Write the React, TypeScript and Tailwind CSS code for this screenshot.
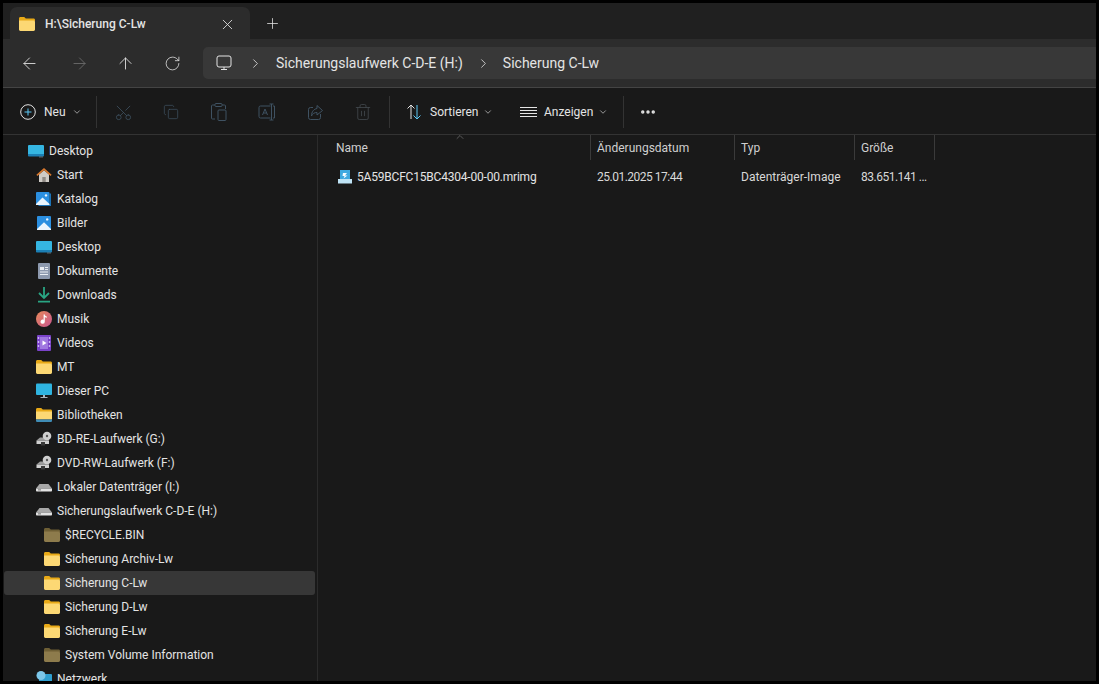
import {
  ArrowLeft,
  ArrowRight,
  ArrowUp,
  ChevronDown,
  ChevronRight,
  ChevronUp,
  Copy,
  MoreHorizontal,
  Plus,
  RotateCw,
  Scissors,
  Trash2,
  X,
} from 'lucide-react';

type IconKind =
  | 'desktop'
  | 'home'
  | 'gallery'
  | 'pictures'
  | 'docs'
  | 'download'
  | 'music'
  | 'video'
  | 'folder'
  | 'dim'
  | 'pc'
  | 'library'
  | 'optical'
  | 'drive'
  | 'network';

const Folder = ({ dim = false }: { dim?: boolean }) => (
  <svg width="16" height="16" viewBox="0 0 16 16">
    <path d="M0 2.500C0 1.700.6 1 1.400 1h3.800l1.600 1.500h7.800c.8 0 1.400.6 1.400 1.400V5H0z" fill={dim ? '#6e5f35' : '#e8a917'} />
    <path d="M0 4.500h14.600c.8 0 1.400.6 1.400 1.400v7.700c0 .8-.6 1.400-1.400 1.400H1.400C.6 15 0 14.400 0 13.600z" fill={dim ? '#8d7b4c' : '#fcd874'} />
  </svg>
);

const NavIcon = ({ kind }: { kind: IconKind }) => {
  if (kind === 'folder') return <Folder />;
  if (kind === 'dim') return <Folder dim />;
  if (kind === 'desktop')
    return (
      <svg width="16" height="16" viewBox="0 0 16 16">
        <path d="M1 2h14a1 1 0 0 1 1 1v9.500H0V3a1 1 0 0 1 1-1z" fill="#35b6e2" />
        <path d="M0 11h16v1.600a.9.9 0 0 1-.9.9H.9a.9.9 0 0 1-.9-.9z" fill="#1b7fb5" />
        <path d="M11.500 13.500h1v1h-1zM13.500 13.500h1v1h-1z" fill="#9fb4c0" />
      </svg>
    );
  if (kind === 'home')
    return (
      <svg width="16" height="16" viewBox="0 0 16 16">
        <path d="M3 7.500 8 3.200l5 4.300V15H3z" fill="#cfcbc6" />
        <path d="M6.300 10h3.400v5H6.300z" fill="#8f8a85" />
        <path d="M8 1 .4 7.800l1 1.100L8 3.200l6.600 5.700 1-1.100z" fill="#d9782d" />
      </svg>
    );
  if (kind === 'gallery' || kind === 'pictures')
    return (
      <svg width="16" height="16" viewBox="0 0 16 16">
        {kind === 'gallery' && <path d="M13.500 2.500H15v12.600H2.500v-1.300h11z" fill="#1c74b8" />}
        <rect x={kind === 'gallery' ? 0 : 1} y="1" width={kind === 'gallery' ? 13.5 : 14} height={kind === 'gallery' ? 13 : 14} rx="1" fill="#2b8fe0" />
        <path d={kind === 'gallery' ? 'M0 13 6.500 6.500 13.500 13v1H0z' : 'M1 14 8 7.200 15 14v1H1z'} fill="#eaf5fd" />
        <circle cx={kind === 'gallery' ? 10 : 11.2} cy="4.400" r="1.200" fill="#eaf5fd" />
      </svg>
    );
  if (kind === 'docs')
    return (
      <svg width="16" height="16" viewBox="0 0 16 16">
        <rect x="2" y="0" width="12" height="16" rx="1" fill="#8d99ae" />
        <path d="M4 4h4v3H4zM9 4h3v1H9zM9 6h3v1H9zM4 8.500h8v1H4zM4 11h8v1H4z" fill="#e9edf3" />
      </svg>
    );
  if (kind === 'download')
    return (
      <svg width="16" height="16" viewBox="0 0 16 16" fill="none" stroke="#29a583" strokeWidth="1.8">
        <path d="M8 0v10.500M3 6 8 11l5-5M2 14.700h12" />
      </svg>
    );
  if (kind === 'music')
    return (
      <svg width="16" height="16" viewBox="0 0 16 16">
        <defs>
          <linearGradient id="mus" x1="0" y1="0" x2="1" y2="1">
            <stop offset="0" stopColor="#e88a5a" />
            <stop offset="1" stopColor="#c9568f" />
          </linearGradient>
        </defs>
        <circle cx="8" cy="8" r="8" fill="url(#mus)" />
        <path d="M7.600 3.500h1.200c.2 1.300 1 1.800 2 2v1.300c-.8 0-1.500-.3-2-.7v4.600a2.100 2.100 0 1 1-1.200-1.900z" fill="#fff" />
      </svg>
    );
  if (kind === 'video')
    return (
      <svg width="16" height="16" viewBox="0 0 16 16">
        <rect x="1" y="0" width="14" height="16" rx="1" fill="#7a43c9" />
        <rect x="4" y="2" width="8" height="12" fill="#a078e0" />
        <path d="M1.800 2h1.400v2H1.800zM1.800 6h1.400v2H1.800zM1.800 10h1.400v2H1.800zM12.800 2h1.400v2h-1.400zM12.800 6h1.400v2h-1.400zM12.800 10h1.400v2h-1.400z" fill="#cbb4f0" />
        <path d="M6.500 5.500 10.500 8l-4 2.500z" fill="#fff" />
      </svg>
    );
  if (kind === 'pc')
    return (
      <svg width="16" height="16" viewBox="0 0 16 16">
        <rect x="0" y="0.500" width="16" height="11.500" rx="1" fill="#2fb4e0" />
        <path d="M7 12h2v2H7zM4.500 14h7v1h-7z" fill="#a9b4bd" />
      </svg>
    );
  if (kind === 'library')
    return (
      <svg width="16" height="16" viewBox="0 0 16 16">
        <path d="M0 2.500C0 1.700.6 1 1.400 1h3.800l1.600 1.500h7.800c.8 0 1.400.6 1.400 1.400V5H0z" fill="#e8a917" />
        <path d="M0 4.500h16v8H0z" fill="#fcd874" />
        <path d="M0 12.500h16v1.200c0 .7-.6 1.300-1.400 1.300H1.400C.6 15 0 14.400 0 13.700z" fill="#3f8cb5" />
      </svg>
    );
  if (kind === 'optical')
    return (
      <svg width="16" height="16" viewBox="0 0 16 16">
        <path d="M.5 9.500 4 6.500h7l2 3z" fill="#9c9c9c" />
        <path d="M.5 9.500H13v3.500H.5z" fill="#d0d0d0" />
        <path d="M5 11h4v3.500H5z" fill="#3a3a3a" />
        <circle cx="11" cy="5" r="4.300" fill="#cfcfcf" />
        <circle cx="11" cy="5" r="1.200" fill="#555" />
      </svg>
    );
  if (kind === 'drive')
    return (
      <svg width="16" height="16" viewBox="0 0 16 16">
        <path d="M3.500 5h9L16 9.500H0z" fill="#a8a8a8" />
        <path d="M0 9.500h16v2.200c0 .4-.3.800-.8.800H.8c-.5 0-.8-.4-.8-.8z" fill="#e2e2e2" />
        <path d="M2 10.500h3v.8H2z" fill="#555" />
      </svg>
    );
  return (
    <svg width="16" height="16" viewBox="0 0 16 16">
      <rect x="3" y="3" width="13" height="11" rx="1" fill="#2f9fd0" />
      <circle cx="5" cy="4.500" r="4.500" fill="#7cc7ea" />
    </svg>
  );
};

const navItems: { label: string; icon: IconKind; level: number; selected?: boolean }[] = [
  { label: 'Desktop', icon: 'desktop', level: 0 },
  { label: 'Start', icon: 'home', level: 1 },
  { label: 'Katalog', icon: 'gallery', level: 1 },
  { label: 'Bilder', icon: 'pictures', level: 1 },
  { label: 'Desktop', icon: 'desktop', level: 1 },
  { label: 'Dokumente', icon: 'docs', level: 1 },
  { label: 'Downloads', icon: 'download', level: 1 },
  { label: 'Musik', icon: 'music', level: 1 },
  { label: 'Videos', icon: 'video', level: 1 },
  { label: 'MT', icon: 'folder', level: 1 },
  { label: 'Dieser PC', icon: 'pc', level: 1 },
  { label: 'Bibliotheken', icon: 'library', level: 1 },
  { label: 'BD-RE-Laufwerk (G:)', icon: 'optical', level: 1 },
  { label: 'DVD-RW-Laufwerk (F:)', icon: 'optical', level: 1 },
  { label: 'Lokaler Datenträger (I:)', icon: 'drive', level: 1 },
  { label: 'Sicherungslaufwerk C-D-E (H:)', icon: 'drive', level: 1 },
  { label: '$RECYCLE.BIN', icon: 'dim', level: 2 },
  { label: 'Sicherung Archiv-Lw', icon: 'folder', level: 2 },
  { label: 'Sicherung C-Lw', icon: 'folder', level: 2, selected: true },
  { label: 'Sicherung D-Lw', icon: 'folder', level: 2 },
  { label: 'Sicherung E-Lw', icon: 'folder', level: 2 },
  { label: 'System Volume Information', icon: 'dim', level: 2 },
  { label: 'Netzwerk', icon: 'network', level: 1 },
];

const rowPadding = ['pl-[24px]', 'pl-[32px]', 'pl-[40px]'];

const NavRow = ({ item }: { item: (typeof navItems)[number] }) => (
  <div
    className={`flex h-[24px] shrink-0 items-center gap-[5px] rounded-[3px] ${rowPadding[item.level]} ${item.selected ? 'bg-[#373737]' : ''}`}
  >
    <NavIcon kind={item.icon} />
    <span className="whitespace-nowrap">{item.label}</span>
  </div>
);

const DisabledIcon = ({ children }: { children: React.ReactNode }) => (
  <div className="flex w-[48px] justify-center text-[#3f5262]">{children}</div>
);

const Separator = () => <div className="h-[32px] w-px bg-[#333333]" />;

const FileIcon = () => (
  <svg width="14" height="14" viewBox="0 0 14 14">
    <path d="M2 0h10v9H2z" fill="#3fa9e0" />
    <path d="M0 9h14v4.500H0z" fill="#bfe3f5" />
    <path d="M5 3h4L7 5.500h2.500L5.500 8.500 6.500 6H4.500z" fill="#f5fbff" />
  </svg>
);

export default function App() {
  return (
    <div className="h-[684px] w-[1099px] overflow-hidden bg-black p-[3px] font-['Roboto',sans-serif] text-[12px] text-[#e4e4e4]">
      <div className="flex h-full flex-col overflow-hidden bg-[#191919]">
        {/* tabs */}
        <div className="flex h-[36px] shrink-0 items-end bg-[#202020] pl-[7px]">
          <div className="flex h-[32px] w-[240px] items-center rounded-t-[7px] bg-[#2c2c2c] pl-[9px] pr-[14px] pt-[2px]">
            <Folder />
            <span className="ml-[10px] font-medium">H:\Sicherung C-Lw</span>
            <X className="ml-auto" size={17} strokeWidth={1.2} />
          </div>
          <div className="flex h-[32px] w-[45px] items-center justify-center">
            <Plus size={17} strokeWidth={1.1} />
          </div>
        </div>

        {/* address row */}
        <div className="flex h-[49px] shrink-0 items-center border-b border-[#444444] bg-[#2c2c2c] text-[14px]">
          <div className="flex w-[200px] shrink-0 items-center">
            <div className="flex w-[52px] justify-center">
              <ArrowLeft size={19} strokeWidth={1.1} />
            </div>
            <div className="flex w-[48px] justify-center text-[#6d6d6d]">
              <ArrowRight size={19} strokeWidth={1.1} />
            </div>
            <div className="flex w-[44px] justify-center">
              <ArrowUp size={19} strokeWidth={1.1} />
            </div>
            <div className="ml-[1px] flex w-[48px] justify-center">
              <RotateCw size={17} strokeWidth={1.1} />
            </div>
          </div>
          <div className="flex h-[32px] flex-1 items-center rounded-l-[5px] bg-[#383838] pl-[13px]">
            <svg width="16" height="16" viewBox="0 0 16 16" fill="none" stroke="#e4e4e4" strokeWidth="1">
              <rect x="1" y="1" width="14" height="11" rx="2" />
              <path d="M5 14.500h6M8 12v2" />
            </svg>
            <ChevronRight className="ml-[16px]" size={15} strokeWidth={1.3} />
            <span className="ml-[13px]">Sicherungslaufwerk C-D-E (H:)</span>
            <ChevronRight className="ml-[13px]" size={15} strokeWidth={1.3} />
            <span className="ml-[12px]">Sicherung C-Lw</span>
          </div>
        </div>

        {/* toolbar */}
        <div className="flex h-[47px] shrink-0 items-center border-b border-[#333333] pl-[17px] pt-[2px]">
          <div className="flex w-[76px] items-center">
            <svg width="16" height="16" viewBox="0 0 16 16" fill="none" strokeWidth="1">
              <circle cx="8" cy="8" r="7.300" stroke="#e4e4e4" />
              <path d="M8 4.500v7M4.500 8h7" stroke="#5cc8f5" />
            </svg>
            <span className="ml-[8px]">Neu</span>
            <ChevronDown className="ml-[6px]" size={10} strokeWidth={1.5} />
          </div>
          <Separator />
          <div className="ml-[2px] flex items-center">
            <DisabledIcon>
              <Scissors className="-rotate-90" size={19} strokeWidth={1} />
            </DisabledIcon>
            <DisabledIcon>
              <Copy size={16} strokeWidth={1.1} />
            </DisabledIcon>
            <DisabledIcon>
              <svg width="18" height="20" viewBox="0 0 18 20" fill="none" stroke="currentColor" strokeWidth="1">
                <path d="M12 3h2.500a1 1 0 0 1 1 1v3M5 17H2.500a1 1 0 0 1-1-1V4a1 1 0 0 1 1-1H5" />
                <rect x="5" y="1.500" width="7" height="3" rx="1" />
                <rect x="8" y="8" width="8" height="10.500" rx="1" />
              </svg>
            </DisabledIcon>
            <DisabledIcon>
              <svg width="18" height="18" viewBox="0 0 18 18" fill="none" stroke="currentColor" strokeWidth="1">
                <path d="M12.500 3H2.500a1.500 1.500 0 0 0-1.500 1.500v9A1.500 1.500 0 0 0 2.500 15h10M15 3h1.500v12H15M13.500 1v16M11.500 1h4M11.500 17h4" />
                <path d="M4.500 12 7 6l2.500 6M5.500 10h3" />
              </svg>
            </DisabledIcon>
            <DisabledIcon>
              <svg width="17" height="17" viewBox="0 0 17 17" fill="none" stroke="currentColor" strokeWidth="1">
                <path d="M13.500 10v3.500a2 2 0 0 1-2 2h-8a2 2 0 0 1-2-2v-8a2 2 0 0 1 2-2H6" />
                <path d="M10 1.500 15.500 6.500 10 11V8.500C7.500 8.500 5.500 9.500 4.500 12 4.500 7.500 7 5 10 4.500z" />
              </svg>
            </DisabledIcon>
            <DisabledIcon>
              <Trash2 className="text-[#464c52]" size={18} strokeWidth={1} />
            </DisabledIcon>
          </div>
          <div className="ml-[2px]">
            <Separator />
          </div>
          <div className="ml-[16px] flex w-[114px] items-center">
            <svg width="16" height="16" viewBox="0 0 16 16" fill="none" strokeWidth="1">
              <path d="M5 15V1M1.500 4.500 5 1l3.500 3.500" stroke="#e4e4e4" />
              <path d="M11 1v14M7.500 11.500 11 15l3.500-3.500" stroke="#5cc8f5" />
            </svg>
            <span className="ml-[8px]">Sortieren</span>
            <ChevronDown className="ml-[5px]" size={10} strokeWidth={1.5} />
          </div>
          <div className="flex w-[103px] items-center">
            <svg width="17" height="16" viewBox="0 0 17 16" fill="none" stroke="#e4e4e4" strokeWidth="1">
              <path d="M0 3.500h17M0 6.500h17M0 9.500h17M0 12.500h17" />
            </svg>
            <span className="ml-[7px]">Anzeigen</span>
            <ChevronDown className="ml-[5px]" size={10} strokeWidth={1.5} />
          </div>
          <Separator />
          <div className="ml-[15px]">
            <MoreHorizontal size={18} strokeWidth={2.6} />
          </div>
        </div>

        {/* main */}
        <div className="flex min-h-0 flex-1">
          <div className="flex w-[315px] shrink-0 flex-col overflow-hidden border-r border-[#2b2b2b] pl-px pr-[2px] pt-[4px]">
            {navItems.map((item, i) => (
              <NavRow key={i} item={item} />
            ))}
          </div>
          <div className="relative flex-1 pl-[15px]">
            <ChevronUp className="absolute left-[136px] top-[-4px] text-[#9a9a9a]" size={12} strokeWidth={1} />
            <div className="flex h-[25px] items-center text-[#cfcfcf]">
              <div className="flex h-full w-[258px] items-center border-r border-[#3a3a3a] pl-[3px]">Name</div>
              <div className="flex h-full w-[144px] items-center border-r border-[#3a3a3a] pl-[6px]">Änderungsdatum</div>
              <div className="flex h-full w-[120px] items-center border-r border-[#3a3a3a] pl-[6px]">Typ</div>
              <div className="flex h-full w-[80px] items-center border-r border-[#3a3a3a] pl-[6px]">Größe</div>
            </div>
            <div className="mt-[6px] flex h-[22px] items-center text-[#d8d8d8]">
              <div className="flex w-[258px] items-center pl-[5px]">
                <FileIcon />
                <span className="ml-[5px] tracking-[-0.2px] text-[#e4e4e4]">5A59BCFC15BC4304-00-00.mrimg</span>
              </div>
              <div className="w-[144px] pl-[6px] tracking-[-0.5px]">25.01.2025 17:44</div>
              <div className="w-[120px] pl-[6px]">Datenträger-Image</div>
              <div className="w-[80px] whitespace-nowrap pl-[6px] tracking-[-0.5px]">83.651.141 ...</div>
            </div>
          </div>
        </div>
      </div>
    </div>
  );
}
